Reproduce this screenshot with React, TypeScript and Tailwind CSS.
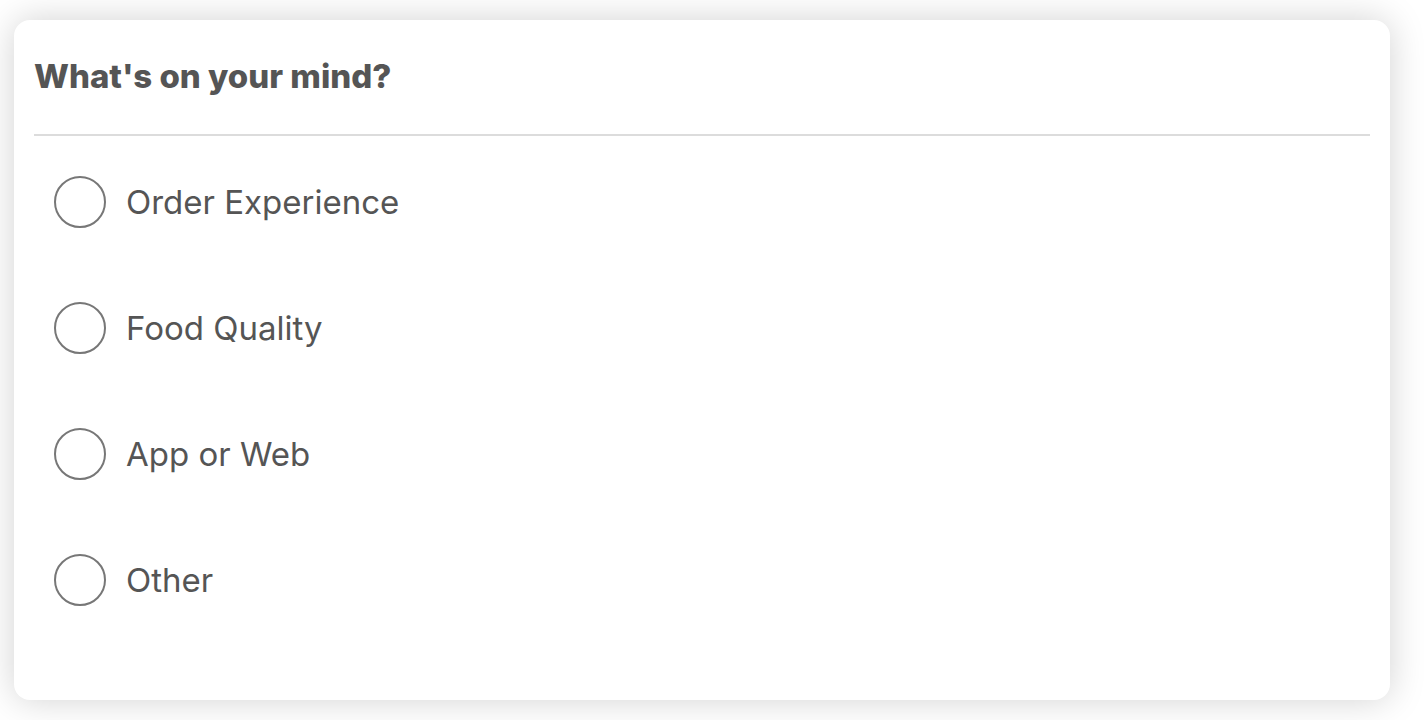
import React, { useState } from 'react';

const options = ['Order Experience', 'Food Quality', 'App or Web', 'Other'];

export default function App() {
  const [selected, setSelected] = useState<string | null>(null);

  return (
    <div className="min-h-screen w-full bg-white pt-5 pl-[14px]" style={{ fontFamily: 'Inter, "Noto Sans", sans-serif' }}>
      <div className="w-[1376px] h-[680px] rounded-2xl bg-white shadow-[0_0_36px_rgba(0,0,0,0.18)] px-5">
        {/* Header */}
        <div className="h-[114px] flex items-center">
          <h2 className="text-[33px] font-extrabold text-[#555555]">What's on your mind?</h2>
        </div>
        <div className="h-[2px] bg-[#dcdcdc]" />

        {/* Options */}
        <div className="pt-10 pl-5 flex flex-col gap-[74px]">
          {options.map((opt) => (
            <label key={opt} className="flex items-center gap-5 h-[52px] cursor-pointer" onClick={() => setSelected(opt)}>
              <span className="w-[52px] h-[52px] rounded-full border-2 border-[#777777] flex items-center justify-center shrink-0">
                {selected === opt && <span className="w-7 h-7 rounded-full bg-[#555555]" />}
              </span>
              <span className="text-[33px] text-[#555555] pt-[2px]">{opt}</span>
            </label>
          ))}
        </div>
      </div>
    </div>
  );
}
